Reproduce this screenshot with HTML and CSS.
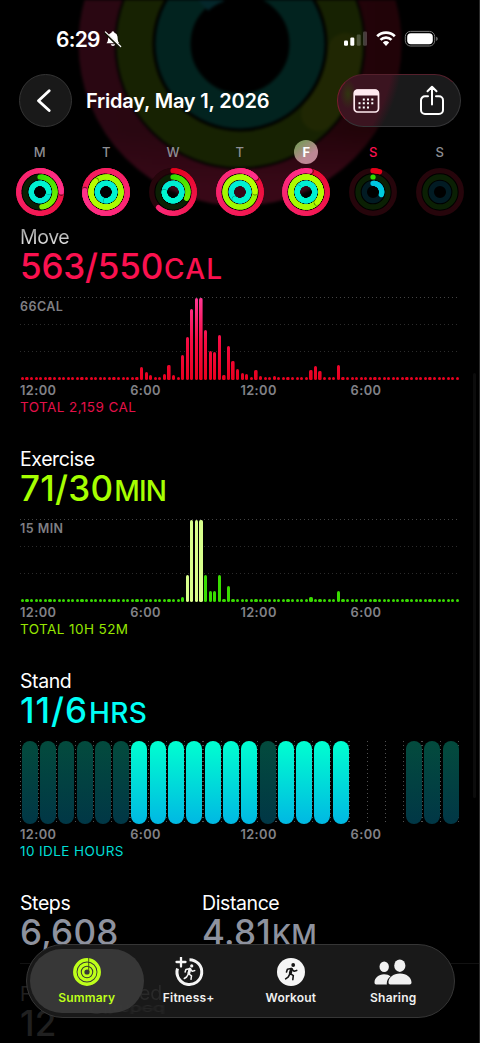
FILE: index.html
```html
<!DOCTYPE html>
<html lang="en">
<head>
<meta charset="utf-8">
<title>Activity Summary</title>
<link rel="stylesheet" href="styles.css">
</head>
<body>
<main class="app">
  <svg class="backdrop" width="480" height="220" viewBox="0 0 480 220" fill="none" aria-hidden="true">
    <defs><linearGradient id="red" x1="0" x2="1"><stop offset="0" stop-color="#2a0712"/><stop offset="1" stop-color="#210308"/></linearGradient>
    <linearGradient id="redlow" x1="0" x2="0" y1="0" y2="1"><stop offset=".8" stop-color="#380817" stop-opacity="0"/><stop offset="1" stop-color="#380817"/></linearGradient></defs>
    <circle cx="240" cy="44" r="143.5" stroke="url(#red)" stroke-width="36"/>
    <circle cx="240" cy="44" r="143.5" stroke="url(#redlow)" stroke-width="36"/>
    <circle cx="240" cy="44" r="105.5" stroke="#172202" stroke-width="36"/>
    <circle cx="240" cy="44" r="67" stroke="#02231f" stroke-width="35"/>
    <path d="M345 50A105 105 0 0 1 318 114" stroke="#202703" stroke-width="34" stroke-linecap="round"/>
    <path d="M200 2A58 58 0 0 1 220-10" stroke="#04272b" stroke-width="24"/>
  </svg>

  <div class="status">
    <span class="clock">6:29</span>
    <svg class="bell" width="18" height="18" viewBox="0 0 18 18"><path d="M2.5 13.2C4.4 11.5 3.9 8.8 4.3 6.5A4.5 4.5 0 0 1 7.4 2.8a1.5 1.5 0 0 1 3 0 4.5 4.5 0 0 1 3.1 3.7c.4 2.3-.1 5 1.8 6.7zM6.7 14.3h4.5a2.3 2.3 0 0 1-4.5 0" fill="#fff"/><path d="M.9 2.7 15.8 17" stroke="#111405" stroke-width="2.5"/><path d="M1.4 1.9 16.7 16.5" stroke="#fff" stroke-width="1.2" stroke-linecap="round"/></svg>
    <svg class="signals" width="96" height="18" viewBox="0 0 96 18" fill="none">
      <g fill="#fff"><rect y="10.5" width="4" height="5.2" rx="1.2"/><rect x="6.3" y="7.5" width="4" height="8.2" rx="1.2"/></g>
      <g fill="#fff" opacity=".22"><rect x="12.7" y="4.5" width="4" height="11.2" rx="1.2"/><rect x="19" y="1.5" width="4" height="14.2" rx="1.2"/></g>
      <g stroke="#fff" stroke-width="2.7"><path d="M33.2 6.3a12.4 12.4 0 0 1 17.6 0M36.5 9.9a7.8 7.8 0 0 1 11 0"/></g>
      <path d="M38.8 12.6a4.7 4.7 0 0 1 6.4 0L42 16z" fill="#fff"/>
      <rect x="61.3" y="1.4" width="29.4" height="14.6" rx="5.2" stroke="#777"/><rect x="63.2" y="3.2" width="25.6" height="11" rx="3.7" fill="#fff"/><path d="M92.2 6.8c2 .6 2 3.5 0 4.1z" fill="#777"/>
    </svg>
  </div>

  <header class="header">
    <button class="back" aria-label="Back"><svg width="53" height="53" viewBox="0 0 53 53" fill="none"><path d="M30.2 16.8 19.500 26.7l10.700 9.8" stroke="#fff" stroke-width="2.9" stroke-linecap="round" stroke-linejoin="round"/></svg></button>
    <h1 class="date">Friday, May 1, 2026</h1>
    <div class="actions">
      <svg width="28" height="28" viewBox="0 0 28 28" fill="none"><rect x="2.2" y="3.2" width="24.3" height="21.8" rx="3.4" stroke="#ffeaf0" stroke-width="1.7"/><path d="M2 8.5V6.2a3.6 3.6 0 0 1 3.6-3.6H23a3.6 3.6 0 0 1 3.6 3.6v2.3z" fill="#ffeaf0"/><g fill="#fff"><path d="M10.8 11.4h2v2h-2zM15 11.4h2v2h-2zM19.3 11.4h2v2h-2zM6.5 15.3h2v2h-2zM10.8 15.3h2v2h-2zM15 15.3h2v2h-2zM19.3 15.3h2v2h-2zM6.5 19.4h2v2h-2zM10.8 19.4h2v2h-2zM15 19.4h2v2h-2z"/></g></svg>
      <svg class="share" width="28" height="34" viewBox="0 0 28 34" fill="none" stroke="#fff" stroke-width="2" stroke-linecap="round" stroke-linejoin="round"><path d="M10 12.3H7a4 4 0 0 0-4 4V26a4 4 0 0 0 4 4h14a4 4 0 0 0 4-4v-9.700a4 4 0 0 0-4-4h-3M14 20.500V3M9.500 7.300 14 2.800l4.500 4.500"/></svg>
    </div>
  </header>

  <div class="week" id="week"></div>

  <section class="metric">
    <h2 class="label label-fade">Move</h2>
    <p class="value move">563/550<span class="unit u-cal">CAL</span></p>
    <div class="chart grid-lines" data-chart="move"><span class="peak">66CAL</span></div>
    <div class="axis"><span>12:00</span><span>6:00</span><span>12:00</span><span>6:00</span></div>
    <p class="total t-move">TOTAL 2,159 CAL</p>
  </section>
  <section class="metric">
    <h2 class="label">Exercise</h2>
    <p class="value exercise">71/30<span class="unit u-min">MIN</span></p>
    <div class="chart grid-lines" data-chart="exercise"><span class="peak">15 MIN</span></div>
    <div class="axis"><span>12:00</span><span>6:00</span><span>12:00</span><span>6:00</span></div>
    <p class="total t-exercise">TOTAL 10H 52M</p>
  </section>
  <section class="metric">
    <h2 class="label">Stand</h2>
    <p class="value stand">11/6<span class="unit u-hrs">HRS</span></p>
    <div class="chart hours" id="hours"></div>
    <div class="axis"><span>12:00</span><span>6:00</span><span>12:00</span><span>6:00</span></div>
    <p class="total t-stand">10 IDLE HOURS</p>
  </section>
  <section class="stats">
    <div><h2 class="label">Steps</h2><p class="value gray">6,608</p></div>
    <div><h2 class="label">Distance</h2><p class="value gray">4.81<span class="unit u-km">KM</span></p></div>
  </section>
  <section class="flights"><h2 class="label">Flights Climbed</h2><p class="value">12</p></section>

  <div class="scrollbar"></div>
  <div class="edge"></div>

  <nav class="tabs">
    <span class="ghost" aria-hidden="true">ed</span>
    <span class="ghost ghost-flip" aria-hidden="true">Climbed</span>
    <a class="tab active">
      <svg width="30" height="30" viewBox="0 0 30 30" fill="none" stroke="#beff1a"><circle cx="15" cy="15" r="12.200" stroke-width="3.500"/><circle cx="15" cy="15" r="7.900" stroke-width="3.300"/><circle cx="15" cy="15" r="3.900" stroke-width="2.600"/><path d="M16.700 1v14" stroke="#3a4817" stroke-width=".9"/></svg>
      <span>Summary</span></a>
    <a class="tab">
      <svg width="30" height="30" viewBox="0 0 30 30" fill="none" stroke="#f5f5f5" stroke-linecap="round" stroke-linejoin="round"><path d="M15.500 2.700A12.400 12.400 0 1 1 3.500 11.500" stroke-width="3" stroke-linecap="butt"/><path d="M7 .5v9M2.500 5h9" stroke-width="2.300"/><circle cx="17.700" cy="8.900" r="1.600" fill="#f5f5f5" stroke="none"/><path d="m15.700 12-1.400 4.500 3.200 2.300-.5 3.500M14.100 17.400l-1.500 2.600-2.300 1.500M15.400 11.800l-3.500.8-.8 2.500M16.400 12.300l1.800 2 2.500-.7" stroke-width="1.500"/><path d="m16 12-1.100 4.200" stroke-width="2.800"/></svg>
      <span>Fitness+</span></a>
    <a class="tab">
      <svg width="30" height="30" viewBox="0 0 30 30" fill="none" stroke="#151515" stroke-linecap="round" stroke-linejoin="round"><circle cx="15" cy="15" r="14" fill="#f5f5f5" stroke="none"/><circle cx="17.200" cy="8" r="1.900" fill="#151515" stroke="none"/><path d="m15.500 12-1.400 4.300 3.200 2.300-.5 4M13.600 17.500l-1.500 2.700-2.500 1.700M15 11.500l-3.600.7-.9 2.800M16 12.200l2 2 2.700-.8" stroke-width="1.600"/><path d="m15.500 12.200-1.200 4" stroke-width="3"/></svg>
      <span>Workout</span></a>
    <a class="tab">
      <svg width="40" height="30" viewBox="0 0 40 30" fill="#f0f0f0"><ellipse cx="11.200" cy="9.700" rx="4.700" ry="5.300"/><path d="M1.500 25.500C1.500 21 5.500 17.300 11 17.300c2.800 0 5 .8 6.500 2.200-2.300 1.500-3.500 3.800-3.700 6.600-.1.600-.1 1 .1 1.400H3.200c-1 0-1.700-.7-1.700-2z"/><ellipse cx="26.800" cy="8.700" rx="5.600" ry="6.200"/><path d="M15.500 25.500c0-5 4.700-9 11.500-9s11.500 4 11.500 9c0 1.300-.7 2-1.800 2H17.300c-1.100 0-1.800-.7-1.800-2z"/></svg>
      <span>Sharing</span></a>
  </nav>
</main>
<script src="app.js"></script>
</body>
</html>
```
FILE: styles.css
```css
* { box-sizing: border-box; margin: 0; padding: 0; }
body { background: #000; color: #fff; font-family: Inter, Roboto, sans-serif; }
.app { position: relative; width: 480px; height: 1043px; overflow: hidden; background: #000; }
.backdrop { position: absolute; left: 0; top: 0; filter: blur(1.5px); }
.status, .header, .week, .metric { position: relative; }

.status { display: flex; align-items: center; height: 74px; padding: 4px 0 0 56px; }
.clock { font-size: 21px; font-weight: 600; letter-spacing: -.7px; width: 47px; white-space: nowrap; }
.bell { margin-left: 1px; }
.signals { margin-left: auto; margin-right: 40px; }

.header { display: flex; align-items: center; height: 53px; padding: 0 19px; }
.back { width: 53px; height: 53px; border: 1px solid #343434; border-radius: 50%; background: #191919; flex: none; }
.back svg { display: block; margin: -1px; }
.date { margin-left: 14px; font-size: 20px; font-weight: 600; letter-spacing: -.2px; white-space: nowrap; }
.actions { display: flex; align-items: center; width: 124px; height: 53px; margin-left: auto; padding-left: 14px; border: 1px solid #363638; border-top-color: #55202c; border-left-color: #781d2e; border-radius: 27px; background: radial-gradient(ellipse 8px 15px at 10px 19px, #303510 0, #30351000 100%), radial-gradient(circle at -98px -30px, #3b1420 154px, #1a1a1b 164px); }
.share { margin-left: 38px; }

.week { display: grid; grid-template-columns: repeat(7, 66.7px); height: 89px; padding: 13px 0 0 6.300px; }
.day { display: flex; flex-direction: column; align-items: center; gap: 4px; }
.day-name { width: 24px; height: 24px; line-height: 24px; border-radius: 50%; text-align: center; font-size: 13px; font-weight: 500; color: #8e8e93; }
.selected { background: linear-gradient(145deg, #829762 20%, #bd8795 65%); color: #fff; font-weight: 700; }
.today { color: #fa114f; }

.metric { height: 222px; padding: 9px 20px 0; }
.label { font-size: 19.500px; font-weight: 400; line-height: 24px; letter-spacing: -.4px; white-space: nowrap; }
.label-fade { color: transparent; background: linear-gradient(#8b8b8b, #e8e8e8 85%); background-clip: text; }
.value { height: 34px; font-size: 35px; font-weight: 500; line-height: 34px; letter-spacing: .25px; white-space: nowrap; }
.unit { font-size: 28px; line-height: 1; margin-left: 1px; }
.u-cal { letter-spacing: 1.200px; }
.u-min { letter-spacing: -.8px; }
.u-hrs { letter-spacing: .4px; }
.u-km { letter-spacing: 0; }
.move { color: #fa114f; letter-spacing: -.2px; }
.exercise { color: #a6ff00; }
.stand { color: #00fff6; letter-spacing: 1px; }
.gray { color: #8e929e; }

.chart { position: relative; display: flex; align-items: flex-end; justify-content: space-between; width: 440px; height: 83px; margin-top: 14px; padding: 0 .4px 0 .9px; }
.grid-lines { background: repeating-linear-gradient(90deg, #444 0 1px, #0000 1px 4px) 0 0 / 100% 1px no-repeat, repeating-linear-gradient(90deg, #2b2b2b 0 1px, #0000 1px 4px) 0 27px / 100% 1px no-repeat, repeating-linear-gradient(90deg, #2b2b2b 0 1px, #0000 1px 4px) 0 54px / 100% 1px no-repeat; }
.peak { position: absolute; left: 0; top: 2px; font-size: 12.500px; line-height: 15px; font-weight: 600; color: #7f7f83; letter-spacing: .45px; }
.bar { width: 3.200px; border-radius: 1.600px; }
.bar-move { background: linear-gradient(0deg, #e9001e 0, #f60c43 40px, #ff3794 82px) bottom / 100% 82px; }
.bar-exercise { background: #39dc00; }
.bar-bright { background: #d8ff8c; }
.hours { gap: 2.300px; justify-content: flex-start; padding: 0 0 0 1.700px; background: repeating-linear-gradient(180deg, #0000 0 1px, #000 1px 4px), repeating-linear-gradient(90deg, #505050 0 1px, #0000 1px 18.250px); }
.hour { width: 16px; height: 83px; border-radius: 8px; }
.hour-idle { background: linear-gradient(#034b3d, #013746); }
.hour-stood { background: linear-gradient(#00ffd0, #00b8e3); }
.axis { display: grid; grid-template-columns: repeat(4, 110.200px); margin-top: 3px; font-size: 12.800px; line-height: 16px; font-weight: 600; color: #828287; letter-spacing: .4px; }
.total { font-size: 13.500px; line-height: 16px; letter-spacing: .42px; white-space: nowrap; }
.t-move { color: #e41049; }
.t-exercise { color: #96e600; }
.t-stand { color: #00ddd5; }

.stats { display: grid; grid-template-columns: 182px 1fr; height: 81px; padding: 9px 0 0 20px; }
.flights { height: 80px; margin-left: 20px; padding-top: 18px; border-top: 1px solid #121212; color: #202020; }

.scrollbar { position: absolute; left: 473px; top: 373px; width: 3px; height: 425px; border-radius: 2px; background: #0c0c0c; }
.edge { position: absolute; right: 0; top: 0; width: 1px; height: 100%; background: #2b2b2b; }

.tabs { position: absolute; left: 26px; top: 944px; width: 429px; height: 74px; display: flex; padding: 4px 3px; border: 1px solid #363636; border-radius: 37px; background: #191919; overflow: hidden; }
.tab { position: relative; display: flex; flex-direction: column; align-items: center; width: 102.300px; height: 64px; padding-top: 8px; }
.tab svg { display: block; flex: none; }
.tab span { margin-top: 4px; font-size: 12px; line-height: 14px; font-weight: 600; color: #f0f0f0; letter-spacing: .2px; white-space: nowrap; }
.active { width: 113.500px; margin-right: -6px; border-radius: 32px; background: #393939f0; }
.active span { color: #beff1a; }
.ghost { position: absolute; left: 112px; top: 36px; font-size: 19.500px; line-height: 24px; color: #292929; filter: blur(.6px); }
.ghost-flip { left: 62px; top: 56px; line-height: 16px; transform: scaleY(-.6); filter: blur(.8px); }
```
FILE: app.js
```js
const NS = 'http://www.w3.org/2000/svg';
const palette = {
  move: { track: '#26050b', from: [228, 0, 25], to: [255, 48, 138] },
  exercise: { track: '#0b2004', from: [48, 220, 0], to: [183, 255, 0] },
  stand: { track: '#021b23', from: [0, 196, 226], to: [0, 246, 208] }
};
const days = [
  ['M', 1.25, 0.48, 1.25], ['T', 1.76, 1.88, 1.5], ['W', 0.62, 0.32, 1.75],
  ['T', 1.13, 1.25, 1.6], ['F', 1.03, 2.37, 1.83], ['S', 0.05, 0.001, 0.3], ['S', 0, 0, 0]
];
const rings = [['move', 21.3], ['exercise', 15], ['stand', 8.7]];

function add(parent, tag, attrs) {
  const node = document.createElementNS(NS, tag);
  for (const key in attrs) node.setAttribute(key, attrs[key]);
  parent.appendChild(node);
}
function point(radius, turn) {
  const a = turn * 2 * Math.PI;
  return (24 + radius * Math.sin(a)).toFixed(2) + ' ' + (24 - radius * Math.cos(a)).toFixed(2);
}
function drawRing(svg, name, radius, amount) {
  const c = palette[name];
  add(svg, 'circle', { cx: 24, cy: 24, r: radius, fill: 'none', stroke: c.track, 'stroke-width': 5.3 });
  if (!amount) return;
  const steps = Math.max(1, Math.ceil(amount * 48));
  for (let i = 0; i < steps; i++) {
    const a = amount * i / steps, b = amount * (i + 1) / steps;
    const f = amount < 0.1 ? 0 : amount < 1 ? b * (name === 'stand' ? 0.6 : 1.3) : Math.min(1, 0.15 + b / amount * 0.85);
    const k = Math.min(1, amount >= 1 && name !== 'move' ? 0.55 + f * 0.45 : f);
    const rgb = c.from.map((v, n) => Math.round(v + (c.to[n] - v) * k));
    if (i === steps - 1 && amount > 1) {
      add(svg, 'path', { d: `M${point(radius, b)}A${radius} ${radius} 0 0 1 ${point(radius, b + 0.012)}`, stroke: '#0007', 'stroke-width': 4.8, 'stroke-linecap': 'round' });
    }
    add(svg, 'path', { d: `M${point(radius, a)}A${radius} ${radius} 0 0 1 ${point(radius, b)}`, stroke: `rgb(${rgb})`, 'stroke-width': 5.2, 'stroke-linecap': 'round', fill: 'none' });
  }
}
const week = document.getElementById('week');
days.forEach((d, i) => {
  const day = document.createElement('div');
  day.className = 'day';
  day.innerHTML = `<span class="day-name${i === 4 ? ' selected' : i === 5 ? ' today' : ''}">${d[0]}</span>`;
  const svg = document.createElementNS(NS, 'svg');
  svg.setAttribute('width', 48);
  svg.setAttribute('height', 48);
  add(svg, 'circle', { cx: 24, cy: 24, r: 18, fill: 'none', stroke: '#000', 'stroke-opacity': .55, 'stroke-width': 12 });
  rings.forEach(([name, r], n) => drawRing(svg, name, r, d[n + 1]));
  day.appendChild(svg);
  week.appendChild(day);
});

// Quarter-hour values, keyed by slot; every other slot is at the resting height.
const charts = {
  move: { 26: 13, 27: 8, 28: 5, 31: 6, 32: 15, 33: 5, 34: 3.5, 35: 25, 36: 43.5, 37: 71, 38: 82, 39: 82, 40: 50, 41: 29, 42: 28, 43: 45, 44: 5, 45: 34.5, 46: 19.500, 47: 11.5, 48: 7.5, 49: 6, 51: 10, 52: 4, 55: 4, 63: 10, 64: 14, 65: 9, 69: 15.5 },
  exercise: { 35: 5.5, 36: 27.5, 37: 82, 38: 82, 39: 82, 40: 27.5, 41: 11, 42: 11, 43: 27.5, 45: 16.5, 63: 5, 69: 11 }
};
document.querySelectorAll('[data-chart]').forEach(el => {
  const name = el.dataset.chart;
  for (let i = 0; i < 96; i++) {
    const bar = document.createElement('i');
    bar.className = `bar bar-${name}` + (name === 'exercise' && i > 35 && i < 40 ? ' bar-bright' : '');
    bar.style.height = (charts[name][i] || 3.2) + 'px';
    el.appendChild(bar);
  }
});
[...'iiiiiisssssssissss---iii'].forEach(s => {
  const hour = document.createElement('i');
  hour.className = 'hour' + (s === 'i' ? ' hour-idle' : s === 's' ? ' hour-stood' : '');
  document.getElementById('hours').appendChild(hour);
});
```
